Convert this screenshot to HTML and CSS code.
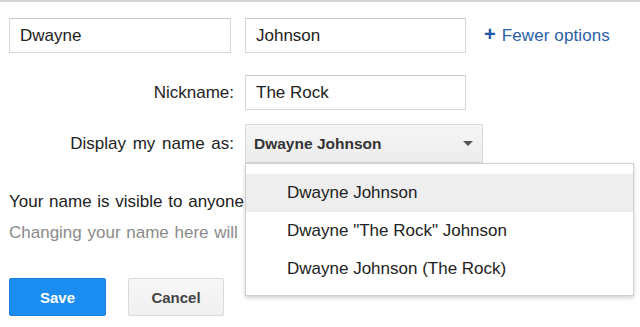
FILE: index.html
```html
<!DOCTYPE html>
<html>
<head>
<meta charset="utf-8">
<link rel="stylesheet" href="styles.css">
</head>
<body>
<div class="page">
  <div class="row names">
    <div class="field first">Dwayne</div>
    <div class="field last">Johnson</div>
    <a class="more" href="#"><span class="plus">+</span>Fewer options</a>
  </div>
  <div class="row labeled nick-row">
    <span class="label">Nickname:</span>
    <div class="field nick">The Rock</div>
  </div>
  <div class="row labeled display-row">
    <span class="label">Display my name as:</span>
    <div class="select-wrap">
      <div class="select">
        <span>Dwayne Johnson</span>
        <span class="arrow"></span>
      </div>
      <ul class="menu">
        <li class="item active">Dwayne Johnson</li>
        <li class="item">Dwayne "The Rock" Johnson</li>
        <li class="item">Dwayne Johnson (The Rock)</li>
      </ul>
    </div>
  </div>
  <div class="notes">
    <p class="note">Your name is visible to anyone</p>
    <p class="note muted">Changing your name here will</p>
  </div>
  <div class="row buttons">
    <button class="btn save">Save</button>
    <button class="btn cancel">Cancel</button>
  </div>
</div>
</body>
</html>
```

FILE: styles.css
```css
html, body {
  margin: 0;
  padding: 0;
  background: #fff;
  overflow: hidden;
}
body {
  font-family: "Liberation Sans", Arial, sans-serif;
  font-size: 17px;
  color: #222;
}
.page {
  border-top: 2px solid #d4d4d4;
  padding: 16px 0 0 9px;
  height: 309px;
}
.row {
  display: flex;
  align-items: center;
}
.field {
  box-sizing: border-box;
  height: 35px;
  border: 1px solid #d6d6d6;
  border-top-color: #c8c8c8;
  padding: 0 10px;
  display: flex;
  align-items: center;
  background: #fff;
}
.first { width: 222px; }
.last { width: 221px; margin-left: 14px; }
.more {
  margin-left: 18px;
  color: #2b5ea8;
  text-decoration: none;
  display: flex;
  align-items: center;
  letter-spacing: 0.1px;
}
.plus {
  font-weight: bold;
  font-size: 20px;
  margin-right: 6px;
  color: #1f56a6;
  position: relative;
  top: -1px;
}
.labeled .label {
  width: 225px;
  text-align: right;
  margin-right: 11px;
  word-spacing: 2px;
}
.nick-row { margin-top: 22px; }
.nick { width: 221px; }
.display-row { margin-top: 14px; align-items: flex-start; }
.display-row .label { line-height: 39px; }
.select-wrap {
  position: relative;
}
.select {
  box-sizing: border-box;
  width: 238px;
  height: 39px;
  border: 1px solid #dcdcdc;
  background: linear-gradient(#f6f6f6, #ececec);
  display: flex;
  align-items: center;
  justify-content: space-between;
  padding: 0 9px 0 8px;
  font-size: 15.5px;
  font-weight: bold;
  color: #333;
}
.arrow {
  width: 0;
  height: 0;
  border-left: 5px solid transparent;
  border-right: 5px solid transparent;
  border-top: 5px solid #555;
}
.menu {
  position: absolute;
  left: 0;
  top: 39px;
  z-index: 2;
  box-sizing: border-box;
  width: 389px;
  height: 133px;
  margin: 0;
  padding: 10px 0 0;
  list-style: none;
  background: #fff;
  border: 1px solid #cfcfcf;
  box-shadow: 0 2px 4px rgba(0,0,0,0.18);
}
.item {
  height: 38px;
  line-height: 38px;
  padding-left: 41px;
  color: #222;
}
.item.active { background: #eeeeee; }
.notes {
  width: 236px;
  overflow: hidden;
  margin-top: 29px;
}
.note {
  margin: 0;
  line-height: 20px;
  white-space: nowrap;
  word-spacing: 1px;
}
.note.muted {
  color: #8a8a8a;
  margin-top: 11px;
}
.buttons { margin-top: 35px; }
.btn {
  box-sizing: border-box;
  height: 38px;
  font-family: "Liberation Sans", Arial, sans-serif;
  font-size: 15px;
  font-weight: bold;
  border-radius: 2px;
  cursor: pointer;
}
.save {
  width: 97px;
  background: #1b8cf0;
  border: 1px solid #1a80e0;
  color: #fff;
}
.cancel {
  width: 96px;
  margin-left: 22px;
  background: linear-gradient(#f7f7f7, #f0f0f0);
  border: 1px solid #dadada;
  color: #444;
}
```
